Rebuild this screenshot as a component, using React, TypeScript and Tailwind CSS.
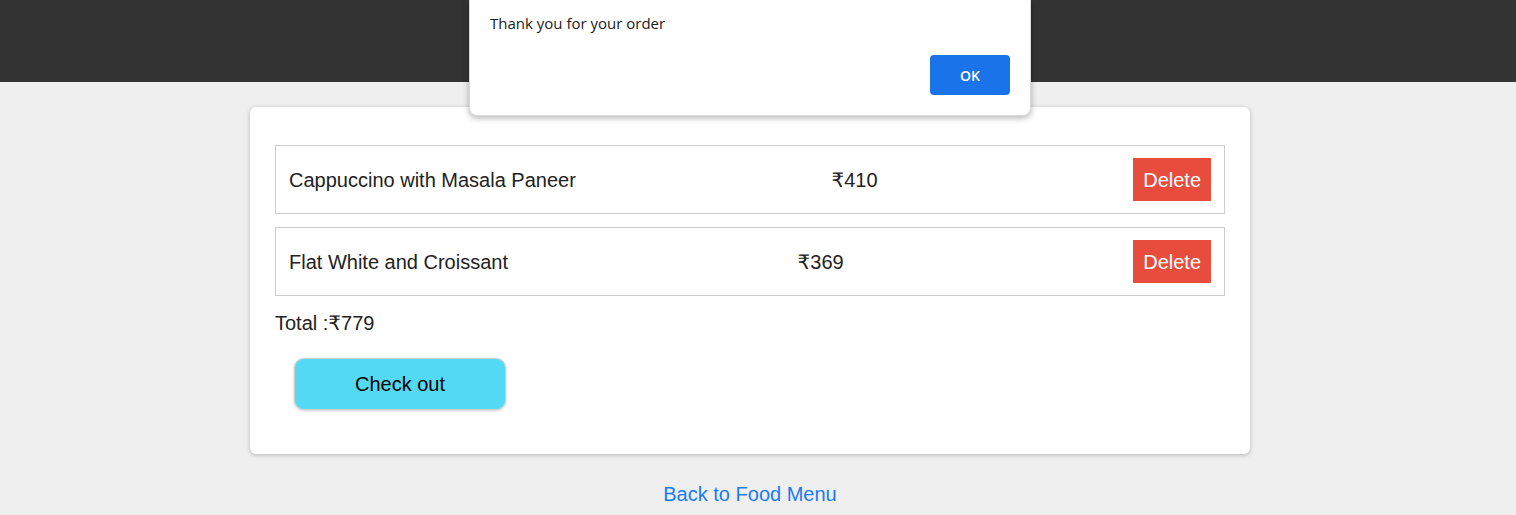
import { useState } from "react";

interface CartItem {
  name: string;
  price: number;
}

const initialItems: CartItem[] = [
  { name: "Cappuccino with Masala Paneer", price: 410 },
  { name: "Flat White and Croissant", price: 369 },
];

const AlertDialog = () => (
  <div
    className="absolute left-[469px] top-0 w-[562px] h-[116px] bg-white rounded-b-lg shadow-[0_2px_6px_rgba(0,0,0,0.3)] border border-t-0 border-[#dadada] px-5"
    style={{ fontFamily: '"Open Sans", "Noto Sans", sans-serif' }}
  >
    <p className="pt-[13px] text-[15px] leading-5 text-[#202124]">Thank you for your order</p>
    <div className="flex justify-end mt-[22px]">
      <button className="w-20 h-10 rounded bg-[#1a73e8] text-white text-[14px] font-semibold">OK</button>
    </div>
  </div>
);

export default function App() {
  const [items, setItems] = useState(initialItems);
  const total = items.reduce((s, i) => s + i.price, 0);

  return (
    <div
      className="relative min-h-[515px] bg-[#efefef] text-[#222]"
      style={{ fontFamily: '"Liberation Sans", Arial, "DejaVu Sans", sans-serif' }}
    >
      <header className="h-[82px] bg-[#333333]" />

      <main className="flex flex-col items-center pt-[25px] pr-4">
        <div className="w-[1000px] bg-white rounded-md shadow-[0_1px_4px_rgba(0,0,0,0.25)] px-[25px] pt-[38px] pb-[44px]">
          <div className="flex flex-col gap-[13px]">
            {items.map((item, idx) => (
              <div
                key={item.name}
                className="h-[69px] border border-[#cccccc] pl-[13px] pr-[13px] flex items-center justify-between text-[20px]"
              >
                <span>{item.name}</span>
                <span>₹{item.price}</span>
                <button
                  onClick={() => setItems(items.filter((_, i) => i !== idx))}
                  className="h-[43px] px-[10px] bg-[#e74c3c] text-white text-[20px]"
                >
                  Delete
                </button>
              </div>
            ))}
          </div>
          <p className="mt-[15px] text-[20px] leading-6">Total :₹{total}</p>
          <button className="mt-[23px] ml-[19px] w-[212px] h-[52px] rounded-[10px] bg-[#53d9f3] border border-[#cfcfcf] shadow-[0_1px_3px_rgba(0,0,0,0.2)] text-[20px] text-black">
            Check out
          </button>
        </div>

        <a href="#" className="mt-[28px] text-[20px] leading-6 text-[#1a7cf5]">
          Back to Food Menu
        </a>
      </main>

      <AlertDialog />
    </div>
  );
}
